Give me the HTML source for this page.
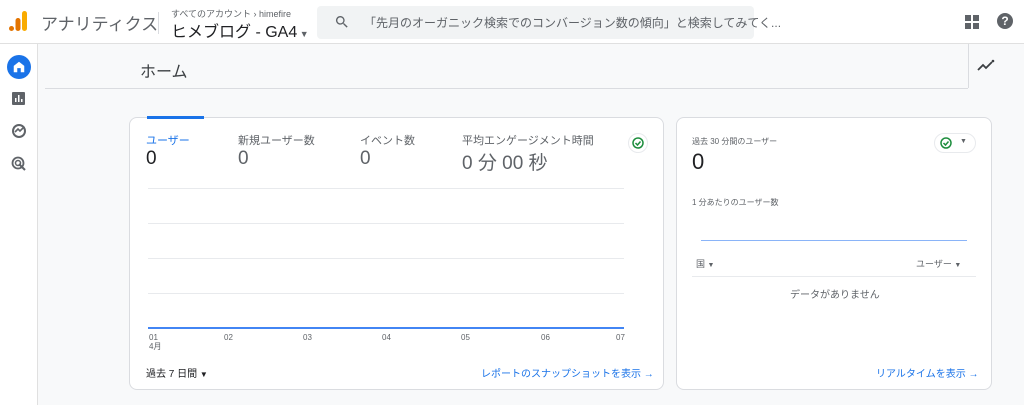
<!DOCTYPE html><html><head><meta charset="utf-8"><style>
*{margin:0;padding:0;box-sizing:border-box}
body{width:1024px;height:405px;overflow:hidden;background:#f8f9fa;font-family:"Liberation Sans","Noto Sans CJK JP",sans-serif;color:#202124;position:relative}
.a{position:absolute}
.t{white-space:nowrap}
</style></head><body>
<div class="a" style="left:0;top:0;width:1024px;height:44px;background:#fff;border-bottom:1px solid #e0e0e0"></div>
<svg class="a" style="left:9px;top:11px" width="20" height="22"><rect x="13" y="0" width="5" height="20" rx="2.5" fill="#f9ab00"/><rect x="6.5" y="7" width="5" height="13" rx="2.5" fill="#e37400"/><circle cx="2.5" cy="17.5" r="2.5" fill="#e37400"/></svg>
<div class="a t" style="left:41px;top:10px;font-size:17px;color:#5f6368">アナリティクス</div>
<div class="a" style="left:158px;top:12px;width:1px;height:22px;background:#dadce0"></div>
<div class="a t" style="left:171px;top:7px;font-size:9px;color:#5f6368">すべてのアカウント › himefire</div>
<div class="a t" style="left:171px;top:18px;font-size:16px;color:#202124">ヒメブログ - GA4<span style="font-size:9px;color:#5f6368"> ▼</span></div>
<div class="a" style="left:317px;top:6px;width:437px;height:33px;background:#f1f3f4;border-radius:4px"></div>
<svg class="a" style="left:334px;top:14px" width="16" height="16" viewBox="0 0 24 24"><path d="M15.5 14h-.8l-.3-.3A6.5 6.5 0 1 0 9.5 16a6.5 6.5 0 0 0 4.2-1.6l.3.3v.8l5 5 1.5-1.5-5-5zm-6 0A4.5 4.5 0 1 1 14 9.5 4.5 4.5 0 0 1 9.5 14z" fill="#5f6368"/></svg>
<div class="a t" style="left:364px;top:14px;font-size:12px;color:#5f6368">「先月のオーガニック検索でのコンバージョン数の傾向」と検索してみてく...</div>
<svg class="a" style="left:965px;top:15px" width="14" height="14"><rect x="0" y="0" width="6" height="6" fill="#5f6368"/><rect x="8" y="0" width="6" height="6" fill="#5f6368"/><rect x="0" y="8" width="6" height="6" fill="#5f6368"/><rect x="8" y="8" width="6" height="6" fill="#5f6368"/></svg>
<div class="a" style="left:997px;top:13px;width:16px;height:16px;border-radius:50%;background:#5f6368;color:#fff;font-size:12px;font-weight:bold;text-align:center;line-height:16px">?</div>
<div class="a" style="left:0;top:44px;width:38px;height:361px;background:#fff;border-right:1px solid #e0e0e0"></div>
<div class="a" style="left:7px;top:55px;width:24px;height:24px;border-radius:50%;background:#1a73e8"></div>
<svg class="a" style="left:12px;top:60px" width="14" height="14" viewBox="0 0 24 24"><path d="M12 3L3 10v11h6v-7h6v7h6V10z" fill="#fff"/></svg>
<svg class="a" style="left:12px;top:92px" width="13" height="13"><rect width="13" height="13" rx="1" fill="#5f6368"/><rect x="3" y="6" width="1.5" height="4" fill="#fff"/><rect x="6" y="3" width="1.5" height="7" fill="#fff"/><rect x="9" y="7" width="1.5" height="3" fill="#fff"/></svg>
<svg class="a" style="left:11px;top:123px" width="16" height="16" viewBox="0 0 16 16"><circle cx="8" cy="8" r="6" fill="none" stroke="#5f6368" stroke-width="2"/><path d="M4 9l3-3 2 2 3-3" fill="none" stroke="#5f6368" stroke-width="1.6"/></svg>
<svg class="a" style="left:11px;top:156px" width="16" height="16" viewBox="0 0 16 16"><circle cx="7" cy="7" r="5.5" fill="none" stroke="#5f6368" stroke-width="1.8"/><circle cx="7" cy="7" r="2.5" fill="none" stroke="#5f6368" stroke-width="1.5"/><path d="M8 8l6 6" stroke="#5f6368" stroke-width="2"/></svg>
<div class="a t" style="left:140px;top:58px;font-size:16px;color:#3c4043">ホーム</div>
<div class="a" style="left:45px;top:88px;width:923px;height:1px;background:#dadce0"></div>
<div class="a" style="left:968px;top:44px;width:1px;height:44px;background:#dadce0"></div>
<svg class="a" style="left:977px;top:58px" width="18" height="14" viewBox="0 0 18 14"><path d="M1 12l5-5 3 3 6-6" fill="none" stroke="#3c4043" stroke-width="1.8"/><circle cx="16" cy="3" r="1.3" fill="#3c4043"/></svg>
<div class="a" style="left:129px;top:117px;width:535px;height:273px;background:#fff;border:1px solid #dadce0;border-radius:8px"></div>
<div class="a" style="left:147px;top:116px;width:57px;height:3px;background:#1a73e8"></div>
<div class="a t" style="left:146px;top:132px;font-size:11px;color:#1a73e8">ユーザー</div>
<div class="a t" style="left:238px;top:132px;font-size:11px;color:#5f6368">新規ユーザー数</div>
<div class="a t" style="left:360px;top:132px;font-size:11px;color:#5f6368">イベント数</div>
<div class="a t" style="left:462px;top:132px;font-size:11px;color:#5f6368">平均エンゲージメント時間</div>
<div class="a t" style="left:146px;top:148px;font-size:19px;color:#202124">0</div>
<div class="a t" style="left:238px;top:148px;font-size:19px;color:#5f6368">0</div>
<div class="a t" style="left:360px;top:148px;font-size:19px;color:#5f6368">0</div>
<div class="a t" style="left:462px;top:148px;font-size:19px;color:#5f6368">0 分 00 秒</div>
<div class="a" style="left:628px;top:133px;width:20px;height:20px;border-radius:50%;border:1px solid #e8eaed"></div>
<svg class="a" style="left:632px;top:137px" width="12" height="12" viewBox="0 0 12 12"><circle cx="6" cy="6" r="5" fill="none" stroke="#1e8e3e" stroke-width="1.5"/><path d="M3.5 6l2 2 3-3.5" fill="none" stroke="#1e8e3e" stroke-width="1.5"/></svg>
<div class="a" style="left:148px;top:188px;width:476px;height:1px;background:#e8eaed"></div>
<div class="a" style="left:148px;top:223px;width:476px;height:1px;background:#e8eaed"></div>
<div class="a" style="left:148px;top:258px;width:476px;height:1px;background:#e8eaed"></div>
<div class="a" style="left:148px;top:293px;width:476px;height:1px;background:#e8eaed"></div>
<div class="a" style="left:148px;top:327px;width:476px;height:2px;background:#4285f4"></div>
<div class="a t" style="left:149px;top:333px;font-size:8px;color:#5f6368;line-height:9px">01<br>4月</div>
<div class="a t" style="left:224px;top:333px;font-size:8px;color:#5f6368">02</div>
<div class="a t" style="left:303px;top:333px;font-size:8px;color:#5f6368">03</div>
<div class="a t" style="left:382px;top:333px;font-size:8px;color:#5f6368">04</div>
<div class="a t" style="left:461px;top:333px;font-size:8px;color:#5f6368">05</div>
<div class="a t" style="left:541px;top:333px;font-size:8px;color:#5f6368">06</div>
<div class="a t" style="left:616px;top:333px;font-size:8px;color:#5f6368">07</div>
<div class="a t" style="left:146px;top:365px;font-size:10px;color:#202124">過去 7 日間 <span style="font-size:8px">▼</span></div>
<div class="a t" style="left:481px;top:365px;font-size:10px;color:#1a73e8">レポートのスナップショットを表示 →</div>
<div class="a" style="left:676px;top:117px;width:316px;height:273px;background:#fff;border:1px solid #dadce0;border-radius:8px"></div>
<div class="a t" style="left:692px;top:136px;font-size:8px;color:#5f6368">過去 30 分間のユーザー</div>
<div class="a t" style="left:692px;top:149px;font-size:22px;color:#202124">0</div>
<div class="a" style="left:934px;top:133px;width:42px;height:20px;border-radius:10px;border:1px solid #e8eaed"></div>
<svg class="a" style="left:940px;top:137px" width="12" height="12" viewBox="0 0 12 12"><circle cx="6" cy="6" r="5" fill="none" stroke="#1e8e3e" stroke-width="1.5"/><path d="M3.5 6l2 2 3-3.5" fill="none" stroke="#1e8e3e" stroke-width="1.5"/></svg>
<div class="a t" style="left:960px;top:138px;font-size:7px;color:#5f6368">▼</div>
<div class="a t" style="left:692px;top:197px;font-size:8px;color:#5f6368">1 分あたりのユーザー数</div>
<div class="a" style="left:701px;top:240px;width:266px;height:1px;background:#8ab4f8"></div>
<div class="a t" style="left:696px;top:257px;font-size:9px;color:#5f6368">国 <span style="font-size:7px">▼</span></div>
<div class="a t" style="left:916px;top:257px;font-size:9px;color:#5f6368">ユーザー <span style="font-size:7px">▼</span></div>
<div class="a" style="left:692px;top:276px;width:284px;height:1px;background:#e8eaed"></div>
<div class="a t" style="left:790px;top:286px;font-size:10px;color:#5f6368">データがありません</div>
<div class="a t" style="left:876px;top:365px;font-size:10px;color:#1a73e8">リアルタイムを表示 →</div>
</body></html>
